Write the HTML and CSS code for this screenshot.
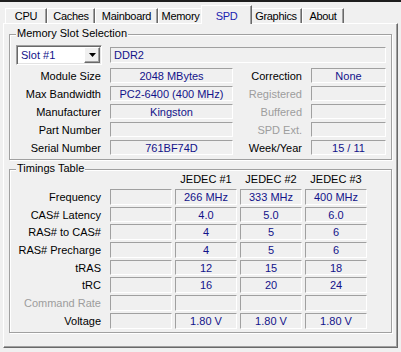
FILE: index.html
```html
<!DOCTYPE html>
<html>
<head>
<meta charset="utf-8">
<link rel="stylesheet" href="styles.css">
</head>
<body>
<div class="titlebar"></div>
<div class="tabs">
  <div class="tab">CPU</div>
  <div class="tab">Caches</div>
  <div class="tab">Mainboard</div>
  <div class="tab">Memory</div>
  <div class="tab active">SPD</div>
  <div class="tab">Graphics</div>
  <div class="tab">About</div>
</div>
<div class="panel">
  <section class="group slot">
    <div class="group-title">Memory Slot Selection</div>
    <div class="slot-grid">
      <div class="select">
        <span class="select-value">Slot #1</span>
        <span class="select-btn"><svg class="arrow" width="7" height="4" viewBox="0 0 7 4"><polygon points="0,0 7,0 3.5,4" fill="#000"/></svg></span>
      </div>
      <div class="field wide left">DDR2</div>

      <div class="label">Module Size</div>
      <div class="field">2048 MBytes</div>
      <div class="label">Correction</div>
      <div class="field">None</div>

      <div class="label">Max Bandwidth</div>
      <div class="field">PC2-6400 (400 MHz)</div>
      <div class="label dim">Registered</div>
      <div class="field"></div>

      <div class="label">Manufacturer</div>
      <div class="field">Kingston</div>
      <div class="label dim">Buffered</div>
      <div class="field"></div>

      <div class="label">Part Number</div>
      <div class="field"></div>
      <div class="label dim">SPD Ext.</div>
      <div class="field"></div>

      <div class="label">Serial Number</div>
      <div class="field">761BF74D</div>
      <div class="label">Week/Year</div>
      <div class="field">15 / 11</div>
    </div>
  </section>

  <section class="group timings">
    <div class="group-title">Timings Table</div>
    <div class="timing-grid">
      <div></div><div></div>
      <div class="head">JEDEC #1</div><div class="head">JEDEC #2</div><div class="head">JEDEC #3</div>

      <div class="label">Frequency</div>
      <div class="field"></div><div class="field">266 MHz</div><div class="field">333 MHz</div><div class="field">400 MHz</div>

      <div class="label">CAS# Latency</div>
      <div class="field"></div><div class="field">4.0</div><div class="field">5.0</div><div class="field">6.0</div>

      <div class="label">RAS# to CAS#</div>
      <div class="field"></div><div class="field">4</div><div class="field">5</div><div class="field">6</div>

      <div class="label">RAS# Precharge</div>
      <div class="field"></div><div class="field">4</div><div class="field">5</div><div class="field">6</div>

      <div class="label">tRAS</div>
      <div class="field"></div><div class="field">12</div><div class="field">15</div><div class="field">18</div>

      <div class="label">tRC</div>
      <div class="field"></div><div class="field">16</div><div class="field">20</div><div class="field">24</div>

      <div class="label dim">Command Rate</div>
      <div class="field"></div><div class="field"></div><div class="field"></div><div class="field"></div>

      <div class="label">Voltage</div>
      <div class="field"></div><div class="field">1.80 V</div><div class="field">1.80 V</div><div class="field">1.80 V</div>
    </div>
  </section>
</div>
</body>
</html>
```

FILE: styles.css
```css
* { box-sizing: border-box; }

body {
  margin: 0;
  width: 401px;
  height: 352px;
  overflow: hidden;
  background: #f0f0f0;
  font-family: "Liberation Sans", Arial, sans-serif;
  font-size: 11px;
  color: #000;
}

.titlebar {
  height: 2px;
  background: #1e1e1e;
}

.tabs {
  display: grid;
  grid-template-columns: 42px 48px 63px 45px 47px 52px 42px;
  align-items: end;
  height: 21px;
  padding-left: 5px;
}

.tab {
  height: 15px;
  line-height: 14px;
  text-align: center;
  letter-spacing: -0.3px;
  border-top: 1px solid #fff;
  border-left: 1px solid #fff;
  border-right: 1px solid #696969;
  box-shadow: inset -1px 0 0 #a0a0a0;
  white-space: nowrap;
}

.tab.active {
  position: relative;
  z-index: 1;
  height: 19px;
  margin: 0 -2px -1px -2px;
  padding-top: 3px;
  background: #f0f0f0;
  color: #1c1cb0;
}

.panel {
  margin: 0 3px;
  height: 325px;
  border: 1px solid;
  border-color: #fff #696969 #696969 #fff;
  box-shadow: inset -1px -1px 0 #a0a0a0;
  padding: 10px 5px 0 5px;
}

.group {
  position: relative;
  border: 1px solid #a0a0a0;
  box-shadow: inset 1px 1px 0 #fff, 1px 1px 0 #fff;
}

.group-title {
  position: absolute;
  left: 6px;
  top: -8px;
  line-height: 13px;
  padding: 0 1px;
  background: #f0f0f0;
}

.slot {
  padding: 9px 4px 4px 6px;
}

.slot-grid {
  display: grid;
  grid-template-columns: 94px 123px 78px 75px;
  grid-template-rows: 21px repeat(5, 15px);
  row-gap: 3px;
}

.timings {
  margin-top: 9px;
  padding: 1px 4px 3px 6px;
}

.timing-grid {
  display: grid;
  grid-template-columns: 91px repeat(4, 62px);
  grid-template-rows: 16px repeat(8, 15.7px);
  column-gap: 3px;
  row-gap: 2px;
}

.label {
  display: flex;
  align-items: center;
  justify-content: flex-end;
  padding-right: 9px;
  white-space: nowrap;
}

.timing-grid .label {
  padding-right: 6px;
}

.label.dim {
  color: #9d9d9d;
}

.head {
  display: flex;
  align-items: center;
  justify-content: center;
  white-space: nowrap;
}

.field {
  display: flex;
  align-items: center;
  justify-content: center;
  border: 1px solid;
  border-color: #a0a0a0 #fff #fff #a0a0a0;
  color: #12128a;
  white-space: nowrap;
  overflow: hidden;
}

.field.left {
  justify-content: flex-start;
  padding-left: 3px;
}

.field.wide {
  grid-column: 2 / 5;
  height: 16px;
  align-self: center;
}

.select {
  display: flex;
  width: 86px;
  height: 20px;
  align-self: center;
  background: #fff;
  border: 1px solid;
  border-color: #a0a0a0 #fff #fff #a0a0a0;
  box-shadow: inset 1px 1px 0 #696969, inset -1px -1px 0 #e3e3e3;
}

.select-value {
  flex: 1;
  padding-left: 4px;
  line-height: 18px;
  color: #12128a;
}

.select-btn {
  display: flex;
  align-items: center;
  justify-content: center;
  width: 16px;
  margin: 1px 1px 1px 0;
  background: #f0f0f0;
  border: 1px solid;
  border-color: #fff #696969 #696969 #fff;
  box-shadow: inset -1px -1px 0 #a0a0a0;
}

.arrow {
  display: block;
}
```
